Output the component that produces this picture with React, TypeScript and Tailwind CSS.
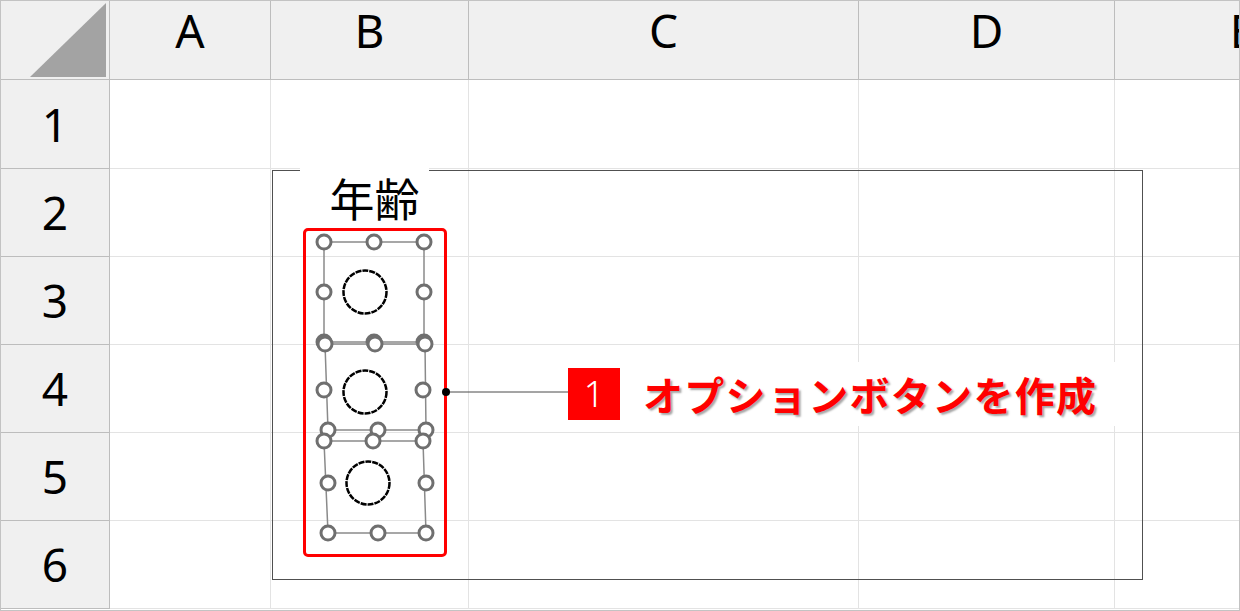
import React from 'react';

const COLS = ['A', 'B', 'C', 'D', 'E'];
const ROWS = [1, 2, 3, 4, 5, 6];
const FONT = { fontFamily: '"Noto Sans", "Open Sans", sans-serif' };
const JP = { fontFamily: '"Noto Sans CJK JP", "Noto Sans", sans-serif' };

type Pt = [number, number];

// 1つのオプションボタン: 8つのハンドル + 枠 + ラジオ円
function OptionShape({ tl, tr, bl, br, mid, circle }: { tl: Pt; tr: Pt; bl: Pt; br: Pt; mid: [Pt, Pt, Pt, Pt]; circle: Pt }) {
  const handles: Pt[] = [tl, mid[0], tr, mid[1], mid[2], bl, mid[3], br];
  return (
    <g>
      <polygon
        points={`${tl[0]},${tl[1]} ${tr[0]},${tr[1]} ${br[0]},${br[1]} ${bl[0]},${bl[1]}`}
        fill="none"
        stroke="#8a8a8a"
        strokeWidth={1.5}
      />
      <circle cx={circle[0]} cy={circle[1]} r={21.5} fill="none" stroke="#000" strokeWidth={2.5} strokeDasharray="6 1" />
      {handles.map(([x, y], i) => (
        <circle key={i} cx={x} cy={y} r={7} fill="#fff" stroke="#6f6f6f" strokeWidth={3} />
      ))}
    </g>
  );
}

export default function App() {
  return (
    <div className="relative w-[1240px] h-[611px] overflow-hidden bg-white border border-[#c3c3c3]" style={FONT}>
      <div className="grid grid-cols-[109px_161px_198px_390px_256px_256px] grid-rows-[79px_89px_88px_88px_88px_88px_88px]">
        {/* 左上の角 */}
        <div className="relative bg-[#f0f0f0] border-r border-b border-[#bdbdbd]">
          <svg className="absolute inset-0" width="108" height="78">
            <polygon points="29,76 105,76 105,2" fill="#a3a3a3" />
          </svg>
        </div>
        {COLS.map((c) => (
          <div
            key={c}
            className="flex justify-center pt-[1px] bg-[#f0f0f0] border-r border-b border-[#bdbdbd] text-[46px] leading-[56px] text-black"
          >
            {c}
          </div>
        ))}
        {ROWS.map((r) => (
          <React.Fragment key={r}>
            <div className="flex items-center justify-center bg-[#f0f0f0] border-r border-b border-[#bdbdbd] text-[46px] text-black">
              {r}
            </div>
            {COLS.map((c) => (
              <div key={c + r} className="border-r border-b border-[#e3e3e3]" />
            ))}
          </React.Fragment>
        ))}
      </div>

      {/* グループボックス */}
      <div className="absolute left-[271px] top-[169px] w-[871px] h-[410px] border border-[#505050]" />
      <div
        className="absolute left-[299px] top-[164px] w-[129px] h-[60px] bg-white flex justify-center items-end pl-[20px] text-[45px] leading-[54px] text-black"
        style={JP}
      >
        年齢
      </div>

      {/* 選択範囲の赤枠 */}
      <div className="absolute left-[302px] top-[227px] w-[144px] h-[329px] border-[3px] border-[#ff0000] rounded-[5px]" />

      <svg className="absolute left-0 top-0 pointer-events-none" width="1240" height="611">
        <OptionShape
          tl={[323, 241]}
          tr={[423, 241]}
          bl={[323, 341]}
          br={[423, 341]}
          mid={[[373, 241], [323, 291], [423, 291], [373, 341]]}
          circle={[364, 291]}
        />
        <OptionShape
          tl={[324, 343]}
          tr={[424, 343]}
          bl={[327, 429]}
          br={[425, 429]}
          mid={[[374, 343], [323, 389], [422, 389], [377, 429]]}
          circle={[364, 391]}
        />
        <OptionShape
          tl={[323, 440]}
          tr={[422, 440]}
          bl={[327, 532]}
          br={[425, 532]}
          mid={[[372, 440], [327, 482], [425, 482], [377, 532]]}
          circle={[367, 482]}
        />
        <line x1={445} y1={391} x2={568} y2={391} stroke="#4a4a4a" strokeWidth={1} />
        <circle cx={445} cy={391} r={4} fill="#000" />
      </svg>

      {/* 吹き出しラベル */}
      <div className="absolute left-[567px] top-[361px] h-[64px] w-[548px] bg-white flex items-center">
        <div className="w-[52px] h-[52px] bg-[#ff0000] flex items-center justify-center text-white text-[36px] leading-none font-light">
          1
        </div>
        <span
          className="ml-[23px] text-[40px] leading-none font-bold text-[#ff0000] tracking-[1.3px] [text-shadow:2px_2px_2px_rgba(0,0,0,0.35)]"
          style={JP}
        >
          オプションボタンを作成
        </span>
      </div>
    </div>
  );
}
